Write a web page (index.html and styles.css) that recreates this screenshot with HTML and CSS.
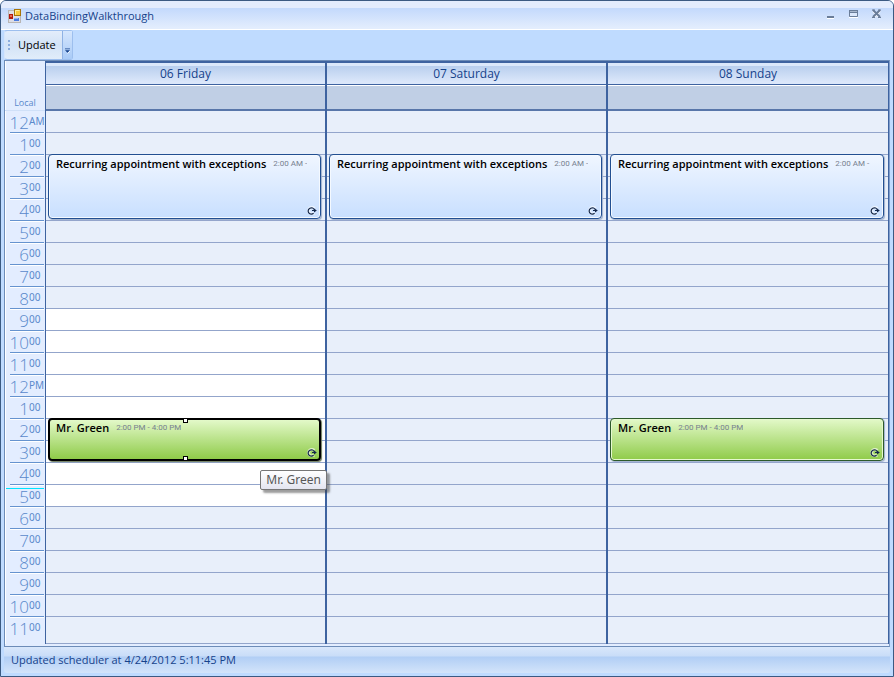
FILE: index.html
```html
<!DOCTYPE html>
<html lang="en">
<head>
<meta charset="utf-8">
<title>DataBindingWalkthrough</title>
<link rel="stylesheet" href="styles.css">
</head>
<body>
<svg class="defs" width="0" height="0" aria-hidden="true">
  <symbol id="recur" viewBox="0 0 10 9">
    <path d="M7 7A3.200 3.200 0 1 1 7.300 2.500" fill="none" stroke="#fff" stroke-width="3" opacity=".6"/>
    <path d="M6.600 7.300A3.200 3.200 0 1 1 7.400 4" fill="none" stroke="#14284b" stroke-width="1.200"/>
    <path d="M5 4h2V2.500L9.800 4.500 7 6.500V5H5z" fill="#14284b"/>
  </symbol>
</svg>
<div class="window">
  <header class="titlebar">
    <svg class="app-icon" width="14" height="14" viewBox="0 0 14 14" aria-hidden="true">
      <rect x=".5" y="1.5" width="12" height="12" fill="#dcdde6" stroke="#b9b6b4"/>
      <rect x="1" y="5" width="4" height="5" fill="#b3190d"/>
      <rect x="2" y="6" width="2" height="2" fill="#ea6a50"/>
      <rect x="6.500" y=".5" width="6" height="6" fill="#f8c93c" stroke="#a87408"/>
      <path d="M7.500 5.500v-4h4" fill="none" stroke="#ffeda0"/>
      <rect x="6" y="9" width="5" height="3" fill="#4a7be0"/>
      <rect x="6" y="9" width="4" height="1" fill="#8fb4f5"/>
    </svg>
    <h1 class="title">DataBindingWalkthrough</h1>
    <div class="window-buttons">
      <button type="button" aria-label="Minimize"><svg width="11" height="10" viewBox="0 0 11 10"><path d="M2 9h7v1H2z" fill="#fff"/><path d="M2 7h7v2H2z" fill="#6a7d99"/></svg></button>
      <button type="button" aria-label="Maximize"><svg width="11" height="10" viewBox="0 0 11 10"><path d="M1 8h9v1H1z" fill="#fff"/><path d="M1.500 1.500h8v6h-8z" fill="#dce8fb" stroke="#6a7d99"/><path d="M1 1h9v3H1z" fill="#6a7d99"/><path d="M2 2h7v1H2z" fill="#a9b8cd"/></svg></button>
      <button type="button" aria-label="Close"><svg width="11" height="10" viewBox="0 0 11 10"><path d="M2 2l7 7M9 2L2 9" stroke="#fff" stroke-width="2"/><path d="M2 1l7 7M9 1L2 8" stroke="#6a7d99" stroke-width="2"/><path d="M1 1h3M7 1h3M1 8.500h3M7 8.500h3" stroke="#6a7d99"/></svg></button>
    </div>
  </header>
  <div class="toolbar">
    <div class="strip">
      <span class="grip"></span>
      <button type="button" class="update">Update</button>
      <button type="button" class="overflow" aria-label="Toolbar options"><svg width="6" height="6" viewBox="0 0 6 6"><path d="M0 0h6v1H0zM0 2h6L3 5z" fill="#15428b"/><path d="M3 6l3-3" stroke="#fff"/></svg></button>
    </div>
  </div>
  <main class="scheduler">
    <div class="ruler">
      <div class="zone">Local</div>
      <ol class="hours">
        <li><b>12</b><sup>AM</sup></li><li><b>1</b><sup>00</sup></li><li><b>2</b><sup>00</sup></li><li><b>3</b><sup>00</sup></li>
        <li><b>4</b><sup>00</sup></li><li><b>5</b><sup>00</sup></li><li><b>6</b><sup>00</sup></li><li><b>7</b><sup>00</sup></li>
        <li><b>8</b><sup>00</sup></li><li><b>9</b><sup>00</sup></li><li><b>10</b><sup>00</sup></li><li><b>11</b><sup>00</sup></li>
        <li><b>12</b><sup>PM</sup></li><li><b>1</b><sup>00</sup></li><li><b>2</b><sup>00</sup></li><li><b>3</b><sup>00</sup></li>
        <li><b>4</b><sup>00</sup></li><li class="current"><b>5</b><sup>00</sup></li><li><b>6</b><sup>00</sup></li><li><b>7</b><sup>00</sup></li>
        <li><b>8</b><sup>00</sup></li><li><b>9</b><sup>00</sup></li><li><b>10</b><sup>00</sup></li><li><b>11</b><sup>00</sup></li>
      </ol>
    </div>
    <section class="day">
      <h2 class="day-name">06 Friday</h2>
      <div class="all-day"></div>
      <div class="slots">
        <div class="lines"></div>
        <div class="work-hours"></div>
        <article class="event at-2">
          <h3>Recurring appointment with exceptions</h3><span class="time">2:00 AM - 5:00 AM</span>
          <svg class="recur" width="10" height="9" aria-hidden="true"><use href="#recur"/></svg>
        </article>
        <article class="event green selected at-14">
          <h3>Mr. Green</h3><span class="time">2:00 PM - 4:00 PM</span>
          <svg class="recur" width="10" height="9" aria-hidden="true"><use href="#recur"/></svg>
          <i class="handle top"></i><i class="handle bottom"></i>
          <div class="tooltip" role="tooltip">Mr. Green</div>
        </article>
      </div>
    </section>
    <section class="day">
      <h2 class="day-name">07 Saturday</h2>
      <div class="all-day"></div>
      <div class="slots">
        <div class="lines"></div>
        <article class="event at-2">
          <h3>Recurring appointment with exceptions</h3><span class="time">2:00 AM - 5:00 AM</span>
          <svg class="recur" width="10" height="9" aria-hidden="true"><use href="#recur"/></svg>
        </article>
      </div>
    </section>
    <section class="day">
      <h2 class="day-name">08 Sunday</h2>
      <div class="all-day"></div>
      <div class="slots">
        <div class="lines"></div>
        <article class="event at-2">
          <h3>Recurring appointment with exceptions</h3><span class="time">2:00 AM - 5:00 AM</span>
          <svg class="recur" width="10" height="9" aria-hidden="true"><use href="#recur"/></svg>
        </article>
        <article class="event green at-14">
          <h3>Mr. Green</h3><span class="time">2:00 PM - 4:00 PM</span>
          <svg class="recur" width="10" height="9" aria-hidden="true"><use href="#recur"/></svg>
        </article>
      </div>
    </section>
  </main>
  <footer class="status">Updated scheduler at 4/24/2012 5:11:45 PM</footer>
</div>
</body>
</html>
```
FILE: styles.css
```css
* { box-sizing: border-box; }

body {
  margin: 0;
  background: #fff;
  color: #15428b;
  font: 11px/16px "Open Sans", "Noto Sans", sans-serif;
}

h1, h2, h3, ol { margin: 0; padding: 0; font-size: inherit; font-weight: 400; }

button {
  padding: 0;
  border: 0;
  background: none;
  color: #000;
  font: inherit;
}

svg { display: block; }
.defs { position: absolute; }

.window {
  display: flex;
  flex-direction: column;
  min-height: 100vh;
  padding-bottom: 3px;
  border: 1px solid #3b5a82;
  border-radius: 6px 6px 0 0;
  background: #bfdbff;
  overflow: hidden;
}

/* Title bar */
.titlebar {
  display: flex;
  align-items: center;
  gap: 3px;
  height: 29px;
  padding: 1px 11px 0 7px;
  border-bottom: 1px solid #fff;
  background: linear-gradient(#e3ecfd 0 7px, #c3d9fc 7px, #e3edfd 27px);
}
.title { flex: 1; }
.window-buttons { display: flex; gap: 12px; margin-bottom: 4px; }

/* Toolbar */
.toolbar { height: 30px; padding: 0 3px; }
.strip {
  display: inline-flex;
  height: 30px;
  border: 1px solid #9dbfee;
  border-left-color: #d5e5fb;
  border-radius: 3px;
  background: linear-gradient(#e3edfb, #d3e3f6 50%, #e1edfa);
}
.grip {
  align-self: center;
  width: 2px;
  height: 10px;
  margin: 0 8px 0 3px;
  background: repeating-linear-gradient(#8badde 0 2px, transparent 2px 4px);
}
.update { padding: 0 6px 0 0; }
.overflow {
  display: flex;
  align-items: flex-end;
  width: 10px;
  padding: 0 2px 5px;
  border-left: 1px solid #8fb2e4;
  background: linear-gradient(#d5e6fd, #a9cbf7);
}

/* Scheduler */
.scheduler {
  display: grid;
  grid-template-columns: 41px repeat(3, 1fr);
  margin: 0 3px;
  padding-bottom: 2px;
  border: 1px solid #6d8cb8;
  border-right-color: #7f9dcb;
  background: #e3edff;
  flex: 1;
}

.ruler {
  display: flex;
  flex-direction: column;
  border-right: 1px solid #3e63a0;
  box-shadow: inset 1px 0 #fff;
  color: #5a89cb;
}
.zone {
  height: 50px;
  padding: 35px 0 0;
  border-bottom: 1px solid #cfe0f8;
  font-size: 9px;
  line-height: 14px;
  text-align: center;
}
.hours {
  display: grid;
  grid-template-rows: repeat(23, 22px) 26px;
  list-style: none;
}
.hours li {
  position: relative;
  display: grid;
  grid-template-columns: 19px 1fr;
  margin: 0 1px 0 5px;
  border-bottom: 1px solid #6593cf;
  box-shadow: 0 1px #fff;
}
.hours li:last-child { border: 0; box-shadow: none; }
.hours b {
  display: flex;
  justify-content: flex-end;
  font-weight: 300;
  font-size: 17px;
  line-height: 24px;
}
.hours sup {
  font-family: "Noto Sans", sans-serif;
  font-size: 10px;
  line-height: 20px;
  vertical-align: baseline;
}
.current::before {
  content: "";
  position: absolute;
  top: 3px;
  right: 0;
  left: -4px;
  height: 1px;
  background: #00e5ff;
}

.day {
  min-width: 0;
  border-top: 2px solid #3e63a0;
  border-right: 2px solid #3e63a0;
}
.day:last-child { border-right-width: 1px; }
.day-name {
  height: 22px;
  border-bottom: 1px solid #3e63a0;
  background: linear-gradient(#dbe8fb 0 3px, #b9cfee 3px, #dbe7fa 19px);
  font-size: 12px;
  line-height: 22px;
  text-align: center;
}
.all-day {
  height: 26px;
  border-top: 1px solid #fff;
  border-bottom: 2px solid #5876a9;
  background: #c0cfe5;
}
.slots {
  display: grid;
  grid-template-rows: repeat(23, 22px) 26px;
  grid-template-columns: minmax(0, 1fr);
  border-bottom: 1px solid #93a5cb;
  background: #e8effa;
}
.slots > * { grid-column: 1; }
.lines, .work-hours {
  background: linear-gradient(transparent 21px, #93a5cb 21px) 0 0 / 100% 22px;
}
.lines { grid-row: 1 / 24; }
.work-hours { grid-row: 10 / 19; background-color: #fff; }

/* Appointments */
.event {
  position: relative;
  display: flex;
  align-items: flex-start;
  gap: 7px;
  min-width: 0;
  margin: -1px 4px 2px 2px;
  padding: 1px 13px 0 7px;
  border: 1px solid #224f91;
  border-radius: 4px;
  background: linear-gradient(#f0f6ff, #c8dfff);
  box-shadow: inset 0 0 0 1px #f4f9ff, 1px 1px 1px #9fb0cc;
  color: #000;
}
.event h3 { font-weight: 600; white-space: nowrap; }
.time {
  flex: 0 1 auto;
  height: 16px;
  overflow: hidden;
  color: #76808f;
  font-family: Roboto, "Noto Sans", sans-serif;
  font-size: 8px;
  white-space: nowrap;
}
.at-2 { grid-row: 3 / 6; }
.at-14 { grid-row: 15 / 17; }
.green {
  border-color: #2d5a2a;
  background: linear-gradient(#e3f9c9, #8fcb49);
  box-shadow: inset 0 0 0 1px #e6f8d0, 1px 1px 1px #9fb0cc;
}
.selected {
  padding: 0 12px 0 6px;
  border: 2px solid #000;
  box-shadow: 1px 1px 1px #6c7c5c;
}
.recur { position: absolute; right: 3px; bottom: 3px; }
.selected .recur { right: 2px; bottom: 2px; }
.handle {
  position: absolute;
  left: 50%;
  width: 5px;
  height: 5px;
  margin-left: -2px;
  border: 1px solid #000;
  background: #fff;
}
.handle.top { top: -2px; }
.handle.bottom { bottom: -2px; }

.tooltip {
  position: absolute;
  z-index: 1;
  top: 50px;
  right: -8px;
  padding: 1px 5px;
  border: 1px solid #767676;
  border-radius: 2px;
  background: linear-gradient(#fff, #e4e5f0);
  box-shadow: 3px 3px 2px rgba(60, 60, 60, .5);
  color: #575757;
  font-family: "Noto Sans", sans-serif;
  font-size: 12px;
  white-space: nowrap;
}

/* Status bar */
.status {
  height: 26px;
  margin: 0 3px;
  padding: 0 7px;
  border-radius: 0 0 3px 3px;
  background: linear-gradient(#d9e7fb, #c9ddf8 9px, #b1cef5 10px, #d3e4fa);
  line-height: 26px;
}
```
